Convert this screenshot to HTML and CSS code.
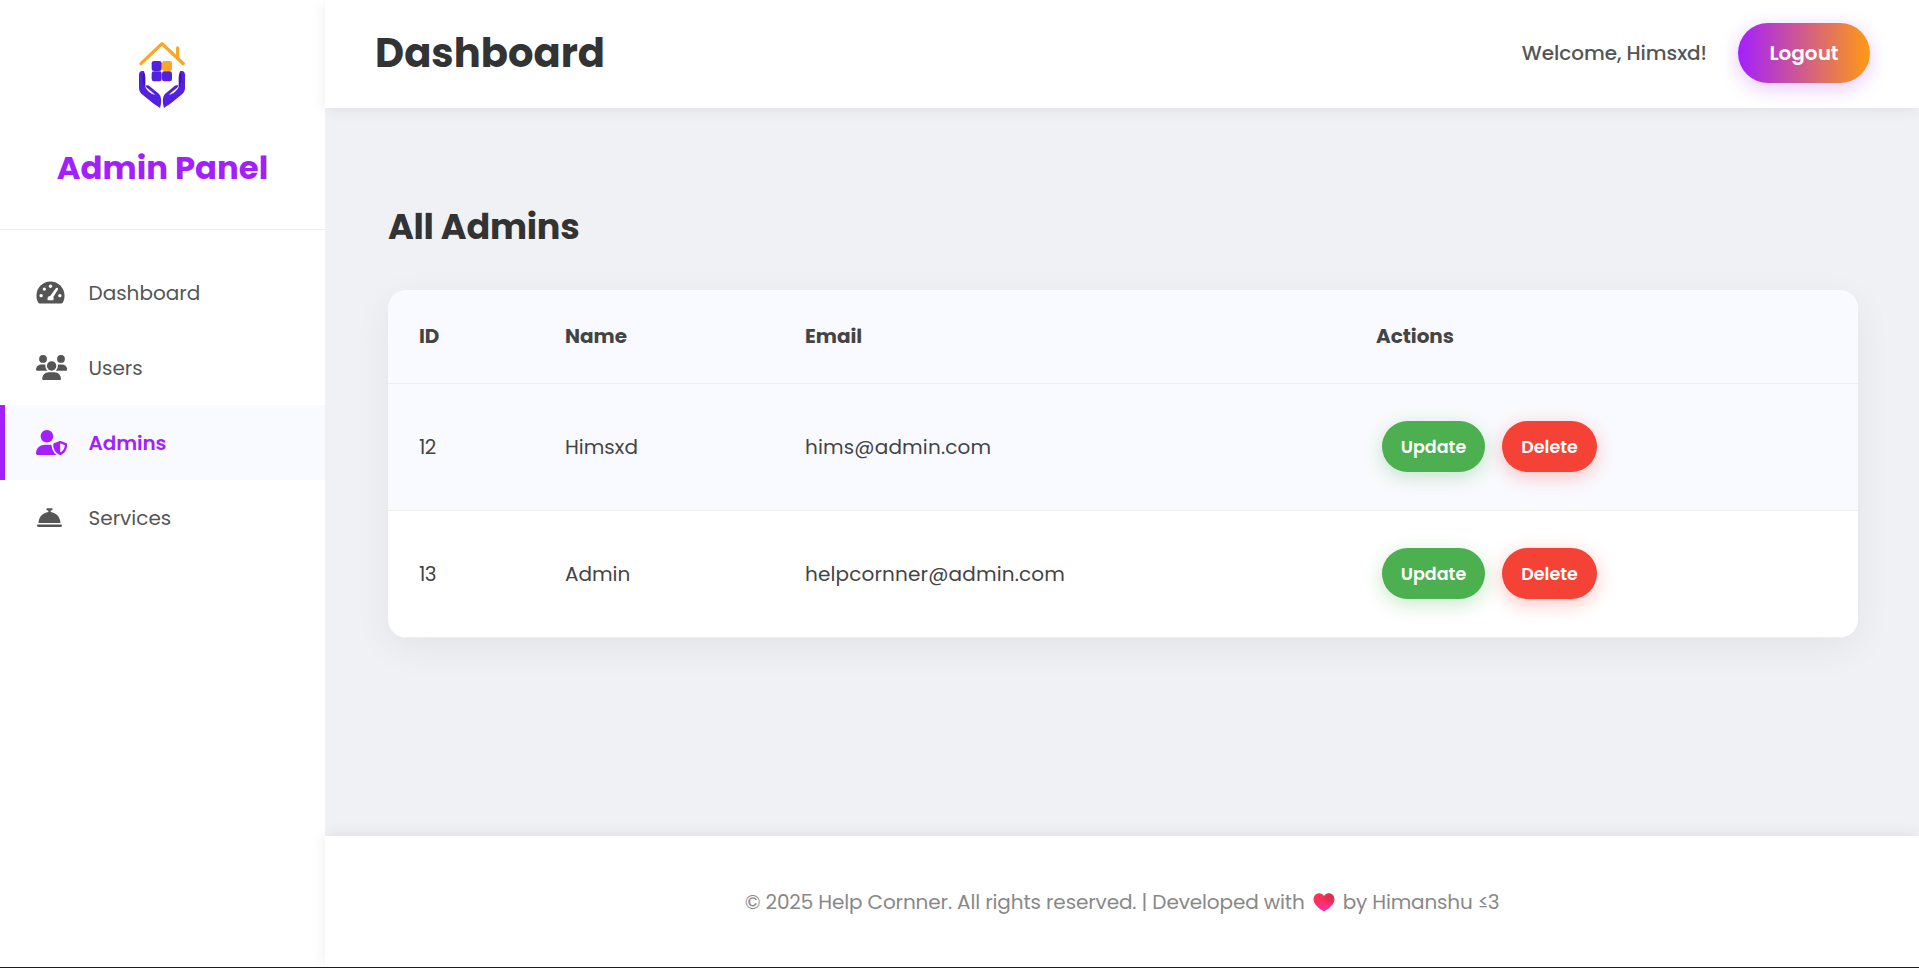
FILE: index.html
```html
<!DOCTYPE html>
<html lang="en">
<head>
<meta charset="utf-8">
<title>Admin Panel</title>
<link rel="stylesheet" href="styles.css">
</head>
<body>
<div class="layout">
  <aside class="sidebar">
    <div class="brand">
      <svg class="brand-logo" viewBox="84 27 150 216" fill="none">
        <path d="M93 101 156 41 220 101M203 84V54" stroke="#f9a826" stroke-width="10" stroke-linecap="round" stroke-linejoin="round"/>
        <rect x="125" y="93" width="30" height="30" rx="7" fill="#5420e0"/>
        <rect x="156" y="93" width="30" height="30" rx="7" fill="#f9a826"/>
        <rect x="125" y="124" width="30" height="30" rx="7" fill="#5420e0"/>
        <rect x="156" y="124" width="30" height="30" rx="7" fill="#5420e0"/>
        <g fill="#5420e0">
          <path d="M98 123c-7-1-11 4-11 12v39c0 8 3 13 8 18l36 29c8 5 14 9 19 13 3-9 4-19 3-28-1-9-6-15-13-20l-19-16c-6-5-15-6-13 0 2 4 15 12 27 24-12-2-25-12-29-24-2-9-3-35-3-43 0-3-2-4-5-4z"/>
          <path d="M101 127c4 3 5 11 5 19v24c-9-8-12-30-5-43z" fill="#3f16b5"/>
        </g>
        <g fill="#5420e0" transform="matrix(-1 0 0 1 312 0)">
          <path d="M98 123c-7-1-11 4-11 12v39c0 8 3 13 8 18l36 29c8 5 14 9 19 13 3-9 4-19 3-28-1-9-6-15-13-20l-19-16c-6-5-15-6-13 0 2 4 15 12 27 24-12-2-25-12-29-24-2-9-3-35-3-43 0-3-2-4-5-4z"/>
          <path d="M101 127c4 3 5 11 5 19v24c-9-8-12-30-5-43z" fill="#3f16b5"/>
        </g>
      </svg>
      <h2 class="brand-title">Admin Panel</h2>
    </div>
    <nav class="nav">
      <a class="nav-item"><span class="nav-icon"><svg width="29" height="25" viewBox="0 0 576 512"><path d="M288 32C129 32 0 161 0 320c0 53 14 102 39 145 6 9 16 15 27 15h444c11 0 22-6 27-15 25-43 39-92 39-145C576 161 447 32 288 32z"/><g class="nav-icon-cut"><circle cx="96" cy="320" r="34"/><circle cx="162" cy="186" r="34"/><circle cx="288" cy="128" r="34"/><circle cx="480" cy="320" r="34"/><path d="M394 173c11-14 27-16 38-9 12 8 15 24 6 38L346 350c10 16 10 41-1 66H231c-17-43 8-84 54-92z"/></g></svg></span><span class="nav-label">Dashboard</span></a>
      <a class="nav-item"><span class="nav-icon"><svg width="31.25" height="25" viewBox="0 0 640 512"><path d="M144 0a80 80 0 1 1 0 160A80 80 0 1 1 144 0zM512 0a80 80 0 1 1 0 160A80 80 0 1 1 512 0zM0 298.7C0 239.8 47.8 192 106.7 192l42.7 0c15.9 0 31 3.5 44.6 9.7c-1.3 7.2-1.9 14.7-1.9 22.3c0 38.2 16.8 72.5 43.3 96c-.2 0-.4 0-.7 0L21.3 320C9.6 320 0 310.4 0 298.7zM405.3 320c-.2 0-.4 0-.7 0c26.6-23.5 43.3-57.8 43.3-96c0-7.6-.7-15-1.9-22.3c13.6-6.3 28.7-9.7 44.6-9.7l42.7 0C592.2 192 640 239.8 640 298.7c0 11.8-9.6 21.3-21.3 21.3l-213.3 0zM224 224a96 96 0 1 1 192 0 96 96 0 1 1 -192 0zM128 485.3C128 411.7 187.7 352 261.3 352l117.3 0C452.3 352 512 411.7 512 485.3c0 14.7-11.9 26.7-26.7 26.7l-330.7 0c-14.7 0-26.7-11.9-26.7-26.7z"/></svg></span><span class="nav-label">Users</span></a>
      <a class="nav-item active"><span class="nav-icon"><svg width="31.25" height="25" viewBox="0 0 640 512"><path d="M224 256c70.7 0 128-57.3 128-128S294.7 0 224 0 96 57.3 96 128s57.3 128 128 128zm-45.7 48C79.8 304 0 383.8 0 482.3C0 498.7 13.3 512 29.7 512H418.3c1.8 0 3.5-.2 5.3-.5c-76.3-55.1-99.8-141-103.1-200.2c-16.1-4.8-33.1-7.3-50.7-7.3H178.3zm308.8-78.3l-120 48C358 277.4 352 286.2 352 296c0 63.3 25.9 168.8 134.8 214.2c5.9 2.5 12.6 2.5 18.5 0C614.1 464.8 640 359.3 640 296c0-9.8-6-18.6-15.1-22.3l-120-48c-5.7-2.3-12.1-2.3-17.8 0zM591.4 312c-3.9 50.7-27.2 116.7-95.4 149.7V273.8L591.4 312z"/></svg></span><span class="nav-label">Admins</span></a>
      <a class="nav-item"><span class="nav-icon nav-icon-bell"><svg width="25" height="25" viewBox="0 0 512 512"><path d="M216 64c-13.3 0-24 10.7-24 24s10.7 24 24 24h16v33.3C119.6 157.2 32 252.4 32 368H480c0-115.6-87.6-210.8-200-222.7V112h16c13.3 0 24-10.7 24-24s-10.7-24-24-24H256 216zM24 400c-13.3 0-24 10.7-24 24s10.7 24 24 24H488c13.3 0 24-10.7 24-24s-10.7-24-24-24H24z"/></svg></span><span class="nav-label">Services</span></a>
    </nav>
  </aside>
  <div class="main">
    <header class="topbar">
      <h1 class="topbar-title">Dashboard</h1>
      <div class="topbar-user">
        <span class="welcome">Welcome, Himsxd!</span>
        <button class="logout">Logout</button>
      </div>
    </header>
    <main class="content">
      <h2 class="section-title">All Admins</h2>
      <div class="card">
        <table class="table">
          <colgroup><col class="col-id"><col class="col-name"><col class="col-email"><col></colgroup>
          <thead><tr><th>ID</th><th>Name</th><th>Email</th><th>Actions</th></tr></thead>
          <tbody>
            <tr class="highlight"><td class="num">12</td><td>Himsxd</td><td class="email">hims@admin.com</td><td><div class="actions"><button class="btn update">Update</button><button class="btn delete">Delete</button></div></td></tr>
            <tr><td class="num">13</td><td>Admin</td><td class="email">helpcornner@admin.com</td><td><div class="actions"><button class="btn update">Update</button><button class="btn delete">Delete</button></div></td></tr>
          </tbody>
        </table>
      </div>
    </main>
    <footer class="footer">
      <span class="footer-copy">© 2025 Help Cornner. All rights reserved. | Developed with</span>
      <svg class="heart" viewBox="0 0 22 19"><defs><linearGradient id="hg" x1="0" y1="0" x2="0" y2="1"><stop offset="0" stop-color="#f7384d"/><stop offset=".5" stop-color="#ff2f64"/><stop offset="1" stop-color="#f22fc0"/></linearGradient><radialGradient id="hs" cx=".8" cy=".2" r=".5"><stop offset="0" stop-color="#c8284e" stop-opacity=".7"/><stop offset="1" stop-color="#c8284e" stop-opacity="0"/></radialGradient><path id="hp" d="M11 3C9 .3 6.500 0 4.800.500 1.500 1.500.200 4.500.700 7.500 1.500 12 6 15.500 11 18.500c5-3 9.500-6.500 10.300-11C21.800 4.500 20.500 1.500 17.200.500 15.500 0 13 .3 11 3z"/></defs><use href="#hp" fill="url(#hg)"/><use href="#hp" fill="url(#hs)"/></svg>
      <span class="footer-author">by Himanshu ≤3</span>
    </footer>
  </div>
</div>
</body>
</html>
```
FILE: styles.css
```css
* { box-sizing: border-box; }
body { margin: 0; font-family: Poppins, Inter, "Liberation Sans", sans-serif; font-size: 20px; color: #444; background: #f0f1f5; }
h1, h2 { margin: 0; }
button { border: 0; font-family: inherit; color: #fff; padding: 0; }
.layout { display: flex; height: 968px; border-bottom: 1px solid #1c1c1c; overflow: hidden; }
.sidebar { width: 325px; flex: none; background: #fff; }
.brand { height: 230px; padding-top: 39px; border-bottom: 1px solid #eee; display: flex; flex-direction: column; align-items: center; }
.brand-logo { width: 50px; height: 72px; display: block; }
.brand-title { margin-top: 33px; color: #a31fff; font-size: 32.3px; font-weight: 700; line-height: 48px; white-space: nowrap; }
.nav { padding-top: 25px; }
.nav-item { display: flex; align-items: center; height: 75px; padding-left: 31px; border-left: 5px solid transparent; color: #555; }
.nav-icon { width: 52.5px; flex: none; display: flex; }
.nav-icon svg { display: block; fill: currentColor; }
.nav-icon .nav-icon-cut { fill: #fff; }
.nav-icon-bell { padding-left: 1.2px; }
.nav-label { padding-top: 1px; }
.nav-item.active { background: #f9faff; border-left-color: #a31fff; color: #a31fff; font-weight: 600; }
.nav-item.active .nav-label { letter-spacing: -.1px; }
.main { flex: 1; min-width: 0; display: flex; flex-direction: column; background: #f0f1f5; position: relative; }
.topbar { height: 108px; flex: none; background: #fff; display: flex; align-items: center; justify-content: space-between; padding: 0 49px 2px 50px; box-shadow: 0 2px 14px rgba(0,0,0,.07); }
.topbar-title { font-size: 40px; font-weight: 700; color: #333; letter-spacing: .05px; }
.topbar-user { display: flex; align-items: center; gap: 31px; }
.welcome { font-weight: 500; color: #555; white-space: nowrap; letter-spacing: -.05px; }
.logout { width: 132px; height: 60px; border-radius: 30px; background: linear-gradient(90deg, #a31fff, #ff9a13); font-size: 20px; font-weight: 600; box-shadow: 0 5px 19px rgba(163,31,255,.25); }
.content { flex: 1; padding: 94px 61px 0 63px; }
.section-title { font-size: 35px; font-weight: 700; line-height: 50px; letter-spacing: -.25px; color: #333; margin-bottom: 38px; }
.card { height: 348px; border-radius: 19px; overflow: hidden; background: #fff; box-shadow: 0 10px 38px rgba(0,0,0,.06); }
.table { width: 100%; table-layout: fixed; border-collapse: separate; border-spacing: 0; }
.col-id { width: 146px; }
.col-name { width: 240px; }
.col-email { width: 571px; }
.table th, .table td { padding: 0 0 0 31px; text-align: left; border-bottom: 1px solid #eee; white-space: nowrap; }
.table th { height: 94px; padding-bottom: 2px; background: #f9faff; font-weight: 700; letter-spacing: -.05px; }
.table td { height: 127px; }
.table .num { letter-spacing: -.6px; }
.table .email { letter-spacing: .15px; }
.highlight td { background: #f9faff; }
.actions { display: flex; gap: 17px; padding: 0 0 1px 6px; }
.btn { height: 51px; border-radius: 25.5px; font-size: 17.5px; font-weight: 600; }
.update { width: 103px; background: #4caf50; box-shadow: 0 5px 19px rgba(76,175,80,.3); }
.delete { width: 95px; background: #f44336; box-shadow: 0 5px 19px rgba(244,67,54,.3); }
.footer { height: 131px; flex: none; background: #fff; display: flex; align-items: center; justify-content: center; color: #888; box-shadow: 0 -2px 14px rgba(0,0,0,.07); white-space: nowrap; padding-top: 1px; }
.footer-copy { letter-spacing: -.12px; word-spacing: -.1px; }
.footer-author { letter-spacing: -.18px; }
.heart { width: 22px; height: 19px; margin: 0 8px; }
```
